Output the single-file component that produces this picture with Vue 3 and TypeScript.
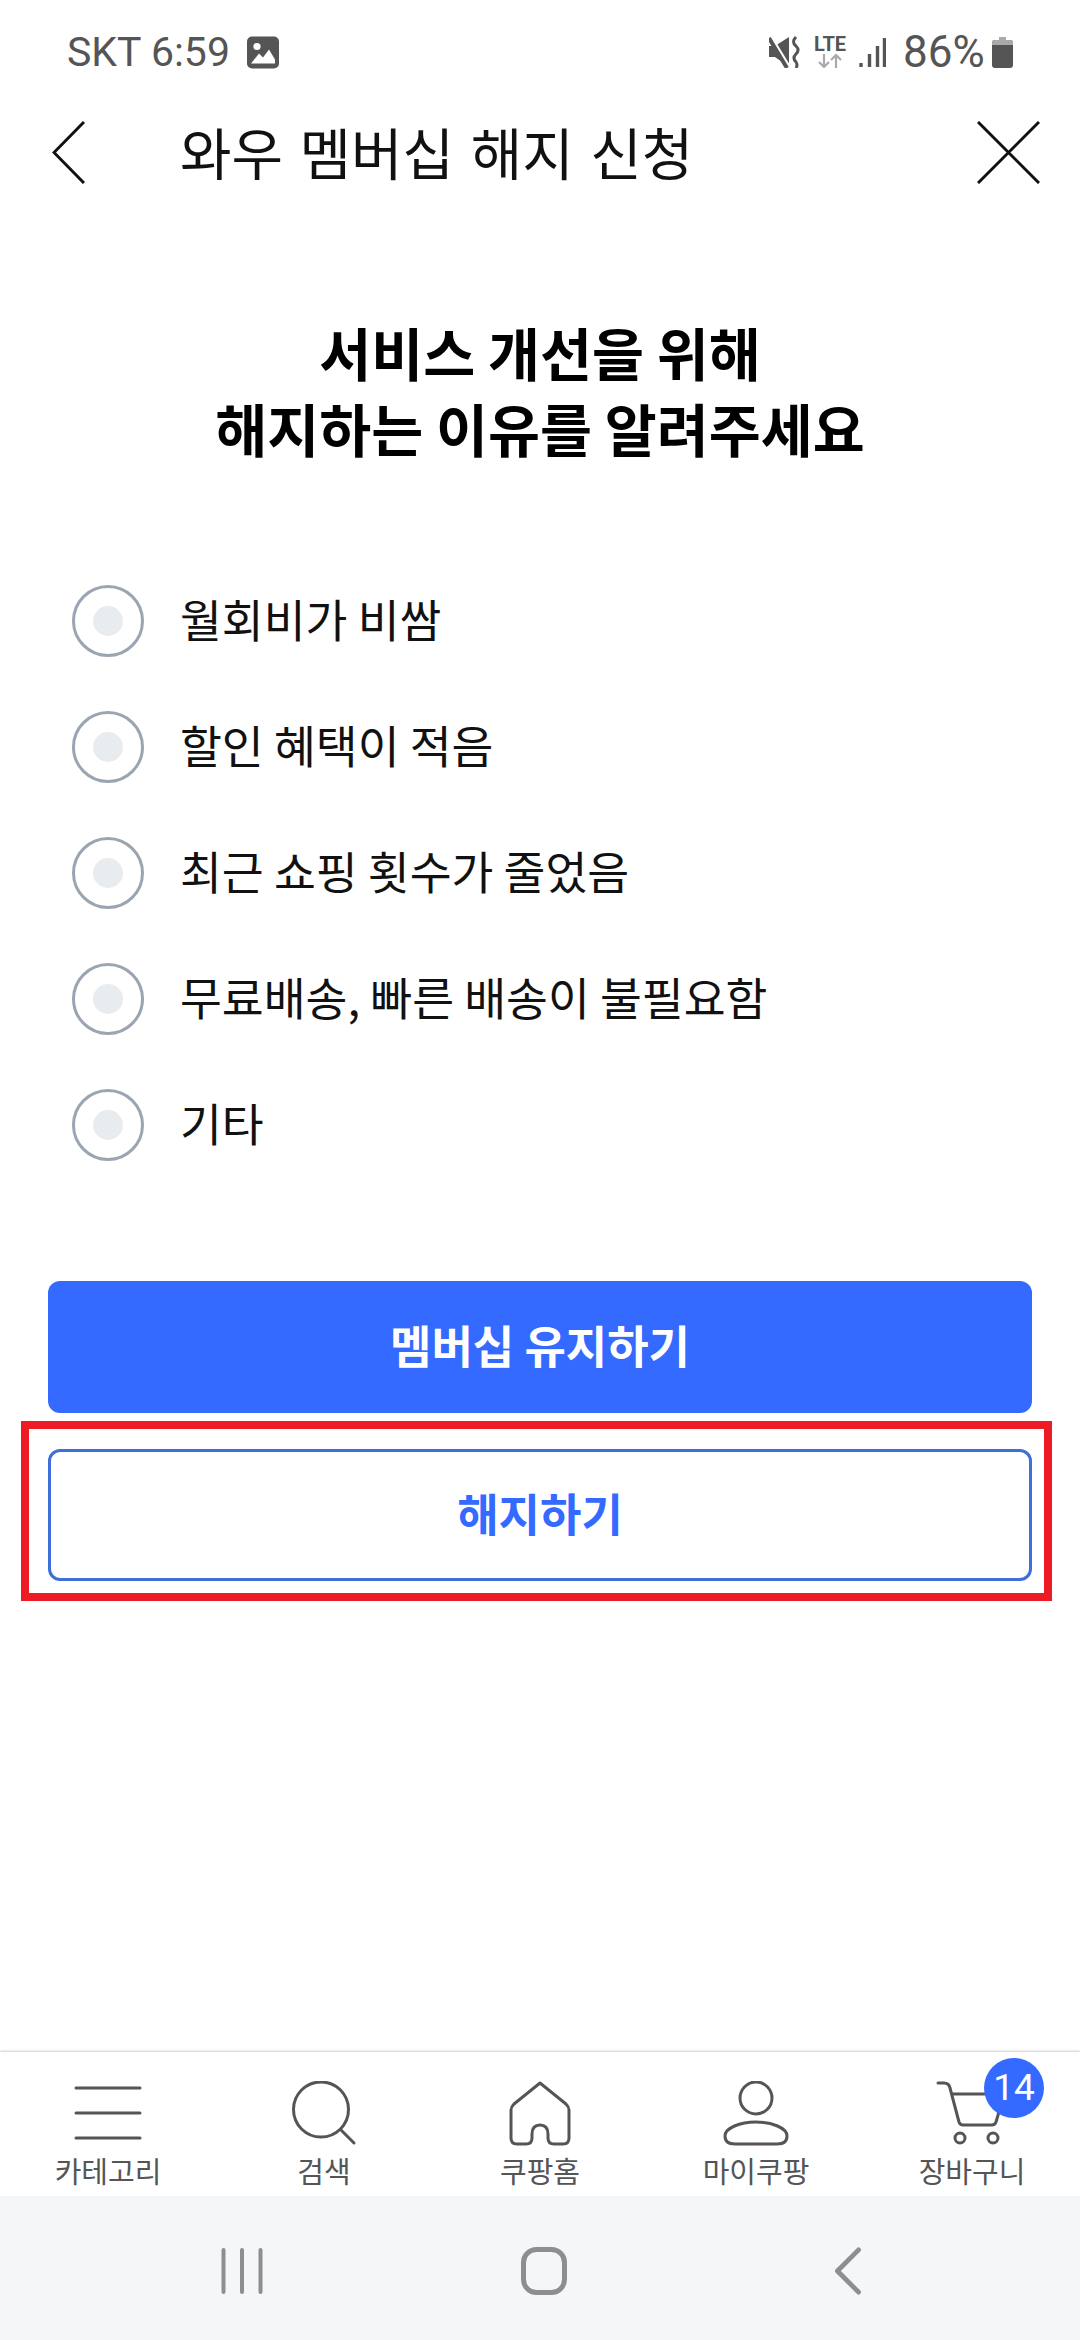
<script setup lang="ts">
interface Tab { label: string; paths: string[]; badge?: number }
const circle = (cx: number, cy: number, r: number) =>
  `M${cx - r} ${cy}a${r} ${r} 0 1 0 ${2 * r} 0a${r} ${r} 0 1 0 ${-2 * r} 0Z`
const reasons: string[] = ['월회비가 비쌈', '할인 혜택이 적음', '최근 쇼핑 횟수가 줄었음', '무료배송, 빠른 배송이 불필요함', '기타']
const tabs: Tab[] = [
  { label: '카테고리', paths: ['M8 7H72', 'M8 32H72', 'M8 57H72'] },
  { label: '검색', paths: [circle(37, 28.500, 27.500), 'M57 49L70 62'] },
  { label: '쿠팡홈', paths: ['M40 2L14 23Q11 26 11 29V57Q11 63 17 63H26Q32 63 32 57V53Q32 44 40 44Q48 44 48 53V57Q48 63 54 63H63Q69 63 69 57V29Q69 26 66 23Z'] },
  { label: '마이쿠팡', paths: [circle(40, 17, 16), 'M19 63H61Q71 63 71 55C71 47 56 41 40 41C24 41 9 47 9 55Q9 63 19 63Z'] },
  { label: '장바구니', paths: ['M6 2H12Q17 2 18 7L27 41Q28 44 31 44H60Q63 44 64 41L69 24', 'M20 13H66', circle(28, 57, 5), circle(61, 57, 5)], badge: 14 },
]
</script>

<template>
  <div class="page">
    <div class="status">
      <div class="status-side">
        <span class="status-text">SKT 6:59</span>
        <svg class="pic" viewBox="0 0 32 32">
          <rect x="0" y="0" width="32" height="32" rx="5" fill="#555" />
          <circle cx="10" cy="10" r="3.600" fill="#fff" />
          <path d="M4 27L12 17L16 21L22 13L28 23V27Z" fill="#fff" />
        </svg>
      </div>
      <div class="status-side">
        <svg class="mute" viewBox="0 0 32 32">
          <path d="M0 10H6L20 1V31L6 21H0Z" fill="#555" />
          <path d="M1 -1L21 32" stroke="#fff" stroke-width="3" />
          <path d="M0 2L18 32" stroke="#555" stroke-width="4" />
          <path d="M27 1Q22 6 27 10Q31 14 27 18Q23 22 27 26Q29 29 27 32" stroke="#555" stroke-width="3" fill="none" />
        </svg>
        <div class="lte">
          <span class="lte-text">LTE</span>
          <svg class="arrows" viewBox="0 0 24 14">
            <path d="M6 0V13M1 8L6 13L11 8" stroke="#aaa" stroke-width="2.200" fill="none" />
            <path d="M18 14V1M13 6L18 1L23 6" stroke="#aaa" stroke-width="2.200" fill="none" />
          </svg>
        </div>
        <svg class="signal" viewBox="0 0 27 29">
          <path d="M2 25V29M10.500 16V29M18.500 8V29M25.500 0V29" stroke="#555" stroke-width="3.400" />
        </svg>
        <span class="status-text pct">86%</span>
        <svg class="battery" viewBox="0 0 21 31">
          <path d="M7 0H14V3H7Z" fill="#aaa" />
          <rect x="0" y="3" width="21" height="28" rx="3" fill="#555" />
          <path d="M0 6Q0 3 3 3H18Q21 3 21 6V8H0Z" fill="#aaa" />
        </svg>
      </div>
    </div>

    <header class="head">
      <svg class="head-icon" viewBox="0 0 33 63">
        <path d="M32 1L2 31.500L32 62" stroke="#111" stroke-width="3" fill="none" />
      </svg>
      <h1 class="title">와우 멤버십 해지 신청</h1>
      <svg class="head-close" viewBox="0 0 63 63">
        <path d="M1 1L62 62M62 1L1 62" stroke="#111" stroke-width="3" fill="none" />
      </svg>
    </header>

    <main class="main">
      <h2 class="lead">서비스 개선을 위해<br />해지하는 이유를 알려주세요</h2>
      <ul class="options">
        <li v-for="r in reasons" :key="r" class="option">
          <span class="radio"><span class="dot"></span></span>
          <span class="option-text">{{ r }}</span>
        </li>
      </ul>
      <div class="buttons">
        <button class="btn primary">멤버십 유지하기</button>
        <div class="marked">
          <button class="btn outline">해지하기</button>
          <div class="red-box"></div>
        </div>
      </div>
    </main>

    <nav class="tabs">
      <div v-for="t in tabs" :key="t.label" class="tab">
        <svg class="tab-icon" viewBox="0 0 80 66">
          <path v-for="(d, i) in t.paths" :key="i" :d="d" stroke="#555" stroke-width="3" fill="none" stroke-linecap="round" stroke-linejoin="round" />
        </svg>
        <span class="tab-label">{{ t.label }}</span>
        <span v-if="t.badge" class="badge">{{ t.badge }}</span>
      </div>
    </nav>

    <div class="sysnav">
      <svg class="sys sys-recent" viewBox="0 0 42 48">
        <path d="M2.500 3V45M21 3V45M39.500 3V45" stroke="#8e8e8e" stroke-width="4" stroke-linecap="round" />
      </svg>
      <svg class="sys sys-home" viewBox="0 0 46 48">
        <rect x="2.500" y="2.500" width="41" height="43" rx="13" stroke="#8e8e8e" stroke-width="5" fill="none" />
      </svg>
      <svg class="sys sys-back" viewBox="0 0 28 50">
        <path d="M25 3L3 25L25 47" stroke="#8e8e8e" stroke-width="5" fill="none" stroke-linecap="round" stroke-linejoin="round" />
      </svg>
    </div>
  </div>
</template>

<style>
html, body { margin: 0; background: #fff; }
</style>

<style scoped>
.page {
  width: 1080px;
  height: 2340px;
  display: flex;
  flex-direction: column;
  background: #fff;
  color: #111;
  font-family: "Noto Sans CJK KR", "Noto Sans", sans-serif;
  overflow: hidden;
}
.status {
  height: 102px;
  box-sizing: border-box;
  padding: 2px 67px 0 67px;
  display: flex;
  justify-content: space-between;
  align-items: center;
}
.status-side { display: flex; align-items: center; }
.status-text {
  font-family: Roboto, "Liberation Sans", sans-serif;
  font-size: 41px;
  line-height: 48px;
  color: #555;
}
.pic { width: 32px; height: 33px; margin-left: 17px; }
.mute { width: 32px; height: 32px; }
.lte {
  display: flex;
  flex-direction: column;
  align-items: center;
  margin-left: 13px;
  width: 32px;
}
.lte-text {
  font-family: Roboto, "Liberation Sans", sans-serif;
  font-weight: 700;
  font-size: 20px;
  line-height: 16px;
  color: #555;
}
.arrows { width: 24px; height: 14px; margin-top: 2px; }
.signal { width: 27px; height: 29px; margin-left: 13px; }
.pct { margin-left: 17px; font-size: 44px; width: 80px; white-space: nowrap; }
.battery { width: 21px; height: 31px; margin-left: 9px; }

.head {
  height: 100px;
  box-sizing: border-box;
  padding: 0 40px 0 52px;
  display: flex;
  align-items: center;
}
.head-icon { width: 33px; height: 63px; flex: none; }
.title {
  margin: -3px 0 0 95px;
  flex: 1;
  font-size: 56px;
  line-height: 70px;
  font-weight: 400;
  word-spacing: 4px;
}
.head-close { width: 63px; height: 63px; flex: none; }

.main {
  flex: 1;
  min-height: 0;
  padding-top: 111px;
  box-sizing: border-box;
}
.lead {
  margin: 0;
  text-align: center;
  font-size: 56.5px;
  line-height: 76px;
  font-weight: 700;
  color: #000;
}
.options {
  list-style: none;
  margin: 93px 0 0;
  padding: 0 0 0 72px;
}
.option {
  height: 126px;
  display: flex;
  align-items: center;
  gap: 36px;
  font-size: 45.5px;
}
.option-text { line-height: 56px; margin-top: -7px; }
.radio {
  width: 72px;
  height: 72px;
  box-sizing: border-box;
  border: 3px solid #9aa5b1;
  border-radius: 50%;
  display: flex;
  align-items: center;
  justify-content: center;
  flex: none;
}
.dot { width: 30px; height: 30px; border-radius: 50%; background: #e9ecef; }
.buttons {
  margin-top: 93px;
  padding: 0 48px;
  display: flex;
  flex-direction: column;
  gap: 36px;
}
.btn {
  display: block;
  width: 100%;
  height: 132px;
  border-radius: 12px;
  font-family: inherit;
  font-size: 45px;
  font-weight: 700;
  box-sizing: border-box;
  padding: 0 0 5px;
}
.primary { background: #346aff; border: none; color: #fff; }
.outline { background: #fff; border: 3px solid #3f6fd8; color: #346aff; }
.marked { position: relative; }
.red-box {
  position: absolute;
  left: -27px;
  right: -20px;
  top: -28px;
  bottom: -20px;
  border: 8px solid #ed1c24;
  pointer-events: none;
}

.tabs {
  height: 144px;
  box-sizing: border-box;
  padding-top: 29px;
  display: grid;
  grid-template-columns: repeat(5, 216px);
  background: #fff;
  box-shadow: 0 -1px 2px rgba(0, 0, 0, 0.2);
  position: relative;
}
.tab {
  position: relative;
  display: flex;
  flex-direction: column;
  align-items: center;
}
.tab-icon { width: 80px; height: 66px; }
.tab-label {
  font-size: 29px;
  line-height: 40px;
  margin-top: 3px;
  color: #555;
}
.badge {
  position: absolute;
  left: 120px;
  top: -23px;
  width: 60px;
  height: 60px;
  border-radius: 50%;
  background: #346aff;
  color: #fff;
  font-family: Roboto, "Liberation Sans", sans-serif;
  font-size: 37px;
  line-height: 60px;
  text-align: center;
}
.sysnav {
  height: 144px;
  box-sizing: border-box;
  padding-top: 6px;
  background: #f5f6f8;
  display: grid;
  grid-template-columns: 1fr 1fr 1fr;
  align-items: center;
  justify-items: center;
}
.sys { display: block; height: 48px; }
.sys-recent { width: 42px; margin-left: 221px; justify-self: start; }
.sys-home { width: 46px; margin-left: 8px; }
.sys-back { width: 28px; justify-self: start; margin-left: 114px; }
</style>
